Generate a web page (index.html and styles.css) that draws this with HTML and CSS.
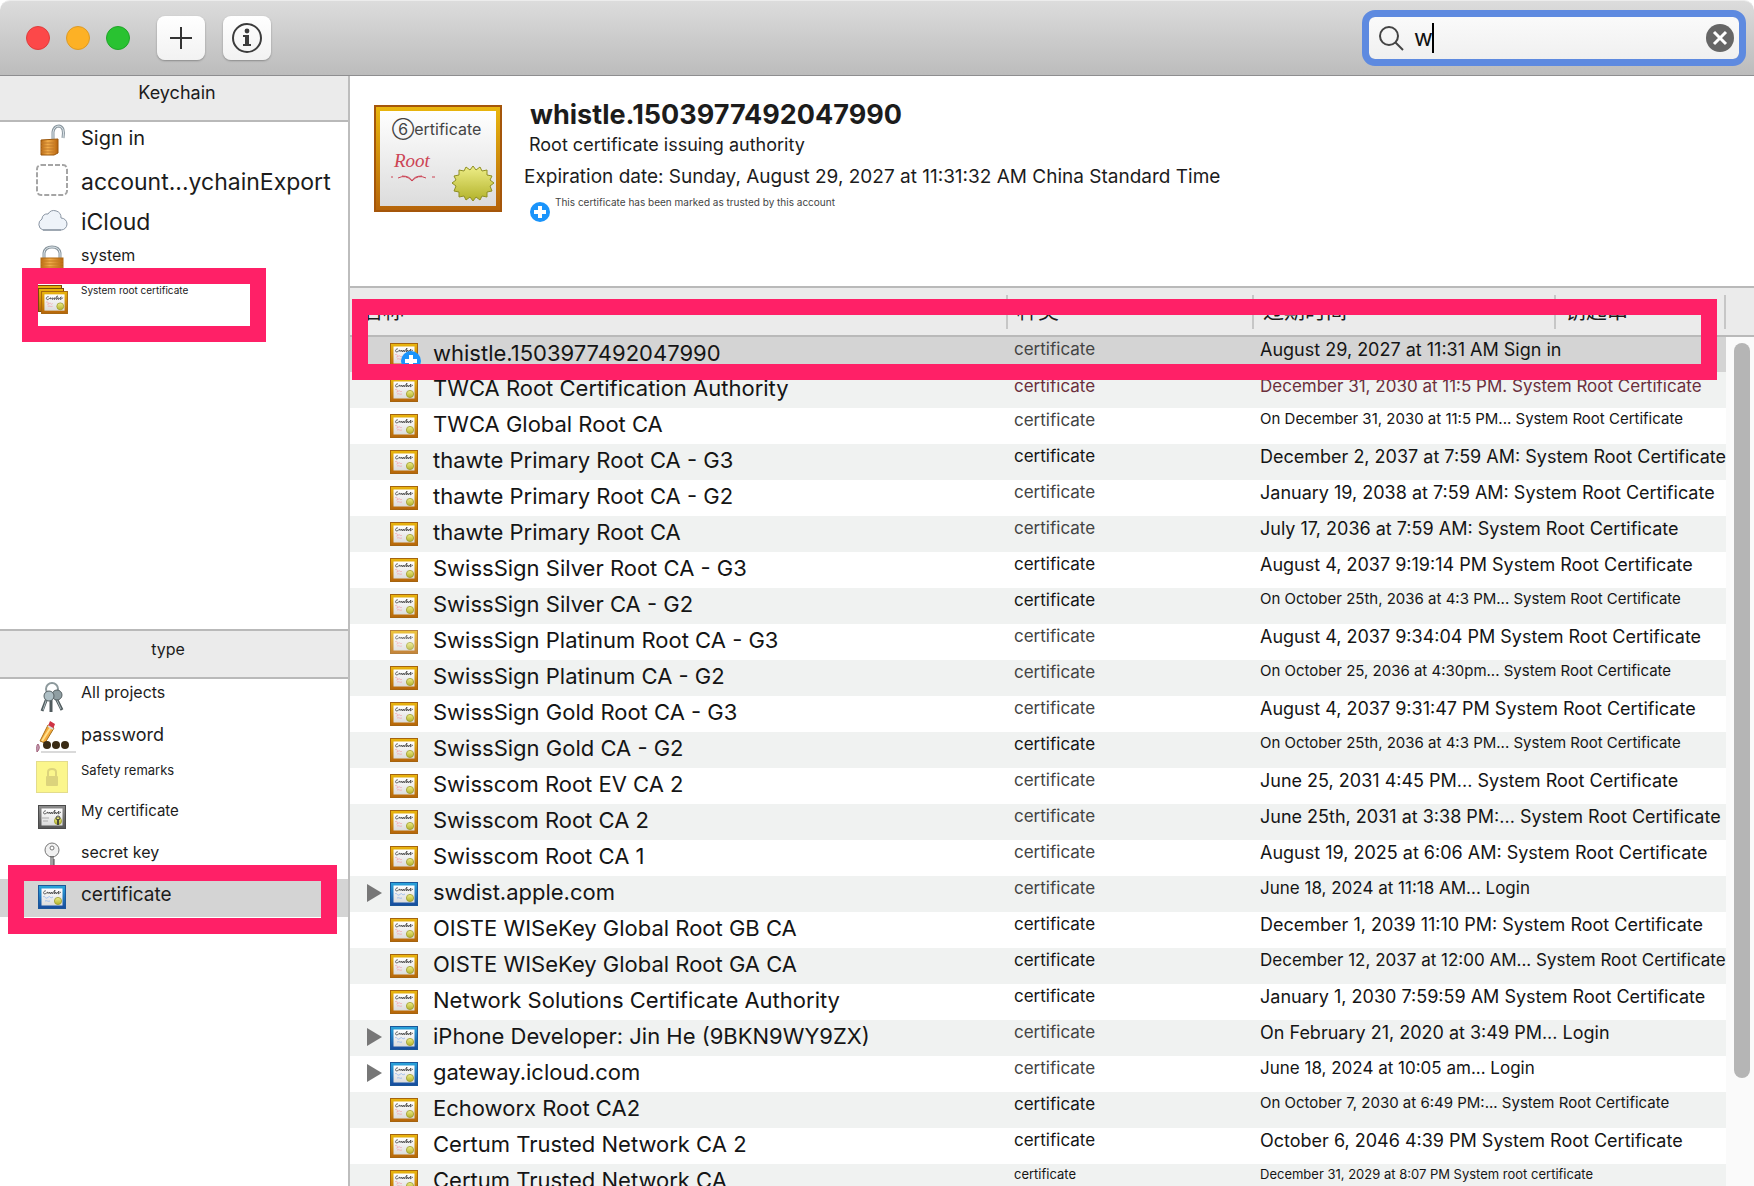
FILE: index.html
```html
<!DOCTYPE html>
<html lang="en">
<head>
    <meta charset="UTF-8">
    <meta name="viewport" content="width=device-width, initial-scale=1.0">
    <title>Keychain Access</title>
    <link rel="stylesheet" href="styles.css">
</head>
<body>
    <svg class="defs" width="0" height="0" aria-hidden="true">
        <defs>
            <linearGradient id="gold" x1="0" y1="0" x2="0" y2="1">
                <stop offset="0" stop-color="#eab70e"/><stop offset="1" stop-color="#b5640a"/>
            </linearGradient>
            <linearGradient id="blue" x1="0" y1="0" x2="0" y2="1">
                <stop offset="0" stop-color="#2aa5dc"/><stop offset="1" stop-color="#174a9c"/>
            </linearGradient>
            <linearGradient id="gray" x1="0" y1="0" x2="0" y2="1">
                <stop offset="0" stop-color="#8d8d8d"/><stop offset="1" stop-color="#555"/>
            </linearGradient>
            <linearGradient id="paper" x1="0" y1="0" x2="0" y2="1">
                <stop offset="0" stop-color="#fff"/><stop offset="1" stop-color="#dcdcdc"/>
            </linearGradient>
            <linearGradient id="seal" x1="0" y1="0" x2="0" y2="1">
                <stop offset="0" stop-color="#eeee88"/><stop offset="1" stop-color="#b2b22a"/>
            </linearGradient>
            <linearGradient id="brass" x1="0" y1="0" x2="1" y2="0">
                <stop offset="0" stop-color="#b96a12"/><stop offset="0.4" stop-color="#f3ae4c"/><stop offset="1" stop-color="#b8640d"/>
            </linearGradient>
        </defs>
        <symbol id="sheet" viewBox="0 0 28 24">
            <rect x="3.500" y="3.500" width="21" height="17" fill="url(#paper)"/>
            <path d="M8 6c-2-1-4 3-1 3l3-2q-1 2 1 1l1-1v2l2-2v2l3-4-1 4 2-2v2l3-3-1 3 3-2" fill="none" stroke="#444" stroke-width="0.8"/>
            <circle cx="20" cy="16" r="3.600" fill="url(#seal)" stroke="#9c9c2e" stroke-width="0.8"/>
        </symbol>
        <symbol id="cert-gold" viewBox="0 0 28 24">
            <rect x="0.5" y="0.5" width="27" height="23" fill="url(#gold)" stroke="#a5640f"/>
            <use href="#sheet" width="28" height="24"/>
            <path d="M5 12c2-2 3 1 2 2s2-2 3-1 1 1 2 0M7 16c2-1 3 1 5 0" fill="none" stroke="#f0a5af" stroke-width="0.8"/>
        </symbol>
        <symbol id="cert-blue" viewBox="0 0 28 24">
            <rect x="0.5" y="0.5" width="27" height="23" fill="url(#blue)" stroke="#1a5799"/>
            <use href="#sheet" width="28" height="24"/>
            <path d="M5 12c2-2 2 2 4 1s2-2 3-1 1 1 3 0M7 16c2-1 3 1 5 0" fill="none" stroke="#8fb4ea" stroke-width="0.8"/>
        </symbol>
        <symbol id="plus-badge" viewBox="0 0 20 20">
            <circle cx="10" cy="10" r="10" fill="#1a94fb"/>
            <path d="M10 4v12M4 10h12" stroke="#fff" stroke-width="4"/>
        </symbol>
    </svg>

    <header class="toolbar">
        <div class="lights">
            <button class="light red" aria-label="Close"></button>
            <button class="light yellow" aria-label="Minimize"></button>
            <button class="light green" aria-label="Zoom"></button>
        </div>
        <button class="tool" aria-label="Add">
            <svg width="22" height="22" viewBox="0 0 22 22"><path d="M11 0v22M0 11h22" stroke="#333" stroke-width="2"/></svg>
        </button>
        <button class="tool" aria-label="Info">
            <svg width="30" height="30" viewBox="0 0 30 30">
                <circle cx="15" cy="15" r="14" fill="none" stroke="#3c3c3c" stroke-width="2"/>
                <circle cx="15" cy="8" r="2.4" fill="#3c3c3c"/>
                <path d="M11 12h6v9h2v2h-8v-2h2v-7h-2z" fill="#3c3c3c"/>
            </svg>
        </button>
        <div class="search">
            <svg width="25" height="25" viewBox="0 0 25 25"><circle cx="10" cy="10" r="9" fill="none" stroke="#444" stroke-width="2"/><path d="M16 16l8 8" stroke="#444" stroke-width="2"/></svg>
            <div class="field">
                <input type="text" value="w" aria-label="Search">
                <span class="caret"></span>
            </div>
            <button class="clear" aria-label="Clear search">
                <svg width="28" height="28" viewBox="0 0 28 28"><circle cx="14" cy="14" r="14" fill="#666"/><path d="M8 8l12 12M20 8L8 20" stroke="#fff" stroke-width="3"/></svg>
            </button>
        </div>
    </header>

    <div class="content">
        <aside class="sidebar">
            <section class="pane keychains">
                <h2>Keychain</h2>
                <nav>
                    <a href="#" class="f20">
                        <svg width="32" height="32" viewBox="0 0 32 32"><path d="M17 15V8q1-6 6-6 6 1 4 12" fill="none" stroke="#8a969e" stroke-width="3"/><path d="M17 15V8q1-6 6-6 6 1 4 12" fill="none" stroke="#dfe8ed" stroke-width="1"/><path d="M5 16l17-1v14l-4 2H5z" fill="url(#brass)" stroke="#9a560c"/><path d="M5 19h13M5 22h13M5 25h13M5 28h13" stroke="#c0792a"/></svg>
                        Sign in
                    </a>
                    <a href="#" class="f23">
                        <svg width="32" height="32" viewBox="0 0 32 32"><rect x="1" y="1" width="30" height="30" rx="4" fill="none" stroke="#a5a5a5" stroke-width="2" stroke-dasharray="5 2"/></svg>
                        account...ychainExport
                    </a>
                    <a href="#" class="f23">
                        <svg width="32" height="32" viewBox="0 0 32 32"><path d="M7 26a6 6 0 0 1-1-11 5 5 0 0 1 6-5 7 7 0 0 1 13 4 6 6 0 0 1 0 12z" fill="#eef3f9" stroke="#8a95a3" stroke-width="1"/><path d="M7 26h18" stroke="#7b8694" stroke-width="1"/></svg>
                        iCloud
                    </a>
                    <a href="#" class="f16">
                        <svg width="32" height="32" viewBox="0 0 32 32"><path d="M8 15V9q1-6 8-6t8 6v6" fill="none" stroke="#8a969e" stroke-width="3"/><path d="M8 15V9q1-6 8-6t8 6v6" fill="none" stroke="#dfe8ed" stroke-width="1"/><rect x="5" y="14" width="22" height="16" fill="url(#brass)" stroke="#b06a14"/><path d="M5 17h22M5 20h22M5 23h22" stroke="#c47a1e"/></svg>
                        system
                    </a>
                    <a href="#" class="f10">
                        <svg width="32" height="32" viewBox="0 0 32 32"><rect x="0.5" y="1.500" width="25" height="23" fill="url(#gold)" stroke="#7a4a08"/><rect x="2.500" y="4.500" width="25" height="23" fill="url(#gold)" stroke="#7a4a08"/><use href="#cert-gold" x="5" y="7" width="27" height="23"/></svg>
                        System root certificate
                    </a>
                </nav>
                <div class="mark mark-root"></div>
            </section>
            <section class="pane types">
                <h2 class="small">type</h2>
                <nav>
                    <a href="#" class="f16">
                        <svg width="32" height="32" viewBox="0 0 32 32"><circle cx="16" cy="8" r="6" fill="none" stroke="#8d999c" stroke-width="2"/><path d="M11 17L6 30M15 18v13M20 17l6 12" stroke="#505b5e" stroke-width="3"/><path d="M11 17L7 29M20 17l5 11" stroke="#a9b6b9" stroke-width="1"/><circle cx="21" cy="14" r="5" fill="#8f9ea2" stroke="#566164"/><circle cx="13" cy="15" r="5" fill="#aebfc5" stroke="#566164"/></svg>
                        All projects
                    </a>
                    <a href="#" class="f18">
                        <svg class="wide" width="40" height="32" viewBox="0 0 40 32"><path d="M12 4l6 3-9 15-5-2z" fill="#f4a93c" stroke="#a8721c"/><path d="M15 6L6 20" stroke="#ffe08a" stroke-width="2"/><path d="M14 0l5 3-2 5-5-3z" fill="#cf3344"/><path d="M12 5l5 3" stroke="#ddd" stroke-width="2"/><path d="M1 31q-1-7 1-8 3 4-1 8z" fill="#c6a2b8" stroke="#a05f78"/><path d="M5 31h35" stroke="#b5b5b5"/><circle cx="11" cy="24" r="4" fill="#3a2b14"/><circle cx="20" cy="24" r="4" fill="#3a2b14"/><circle cx="29" cy="24" r="4" fill="#3a2b14"/></svg>
                        password
                    </a>
                    <a href="#" class="f13">
                        <svg width="32" height="32" viewBox="0 0 32 32"><rect x="0.5" y="0.5" width="31" height="31" fill="#fbf68c" stroke="#e3dc8c"/><path d="M12 15v-4q0-3 4-3t4 3v4" fill="none" stroke="#dcd37c" stroke-width="2"/><rect x="10" y="15" width="12" height="10" rx="1" fill="#dcd37c"/></svg>
                        Safety remarks
                    </a>
                    <a href="#" class="f15">
                        <svg width="32" height="32" viewBox="0 0 32 32"><rect x="2.500" y="4.500" width="27" height="23" fill="url(#gray)" stroke="#4a4a4a"/><use href="#sheet" x="2" y="4" width="28" height="24"/><path d="M6 17h7M7 20h5" stroke="#aaa"/><circle cx="22" cy="17" r="2" fill="none" stroke="#4a4a3a"/><path d="M22 18v6" stroke="#4a4a3a" stroke-width="2"/></svg>
                        My certificate
                    </a>
                    <a href="#" class="f16">
                        <svg width="32" height="32" viewBox="0 0 32 32"><circle cx="16" cy="9" r="7" fill="#f1f1f1" stroke="#777"/><circle cx="16" cy="7" r="2" fill="#fff" stroke="#777"/><path d="M15 15v16h2V15M18 18v10" fill="none" stroke="#444"/></svg>
                        secret key
                    </a>
                    <a href="#" class="f19 selected">
                        <svg width="32" height="32" viewBox="0 0 32 32"><use href="#cert-blue" x="2" y="4" width="28" height="24"/></svg>
                        certificate
                    </a>
                </nav>
                <div class="mark mark-type"></div>
            </section>
        </aside>

        <main class="main">
            <section class="detail">
                <svg class="certificate" width="128" height="107" viewBox="0 0 128 107">
                    <rect x="1" y="1" width="126" height="105" fill="url(#gold)" stroke="#a5560a" stroke-width="2"/>
                    <rect x="6" y="6" width="116" height="95" fill="url(#paper)"/>
                    <text class="cert-title" x="18" y="30">⑥ertificate</text>
                    <text class="cert-root" x="20" y="62">Root</text>
                    <path d="M17 72h2M24 73q8-4 14 3 6-7 14-3M28 71q8 0 10 5 2-5 10-5M58 72h3" fill="none" stroke="#cc4455"/>
                    <path d="M99 61l3 4 4-3 2 4 5-1 0 5 5 1-2 4 4 3-4 3 2 5-5 1 0 5-5-1-2 4-4-3-3 4-3-4-4 3-2-4-5 1 0-5-5-1 2-5-4-3 4-3-2-4 5-1 0-5 5 1 2-4 4 3z" fill="url(#seal)" stroke="#8f8f22"/>
                </svg>
                <div class="info">
                    <h1>whistle.1503977492047990</h1>
                    <p class="issuer">Root certificate issuing authority</p>
                    <p class="expires">Expiration date: Sunday, August 29, 2027 at 11:31:32 AM China Standard Time</p>
                    <p class="trust"><svg width="20" height="20"><use href="#plus-badge" width="20" height="20"/></svg>This certificate has been marked as trusted by this account</p>
                </div>
            </section>

            <section class="list">
                <table>
                    <colgroup><col><col class="col-kind"><col class="col-date"><col class="col-chain"><col class="col-scroll"></colgroup>
                    <thead>
                        <tr><th><span>名称</span></th><th><span>种类</span></th><th><span>过期时间</span></th><th><span>钥匙串</span></th><th></th></tr>
                    </thead>
                    <tbody id="rows"></tbody>
                </table>
                <div class="thumb"></div>
                <div class="mark mark-row"></div>
            </section>
        </main>
    </div>
    <script>
        // name, kind class, date class, date and keychain, icon, row class
        const certs = [
            ["whistle.1503977492047990", "dim", "large", "August 29, 2027 at 11:31 AM Sign in", "trusted", "selected"],
            ["TWCA Root Certification Authority", "", "medium", "December 31, 2030 at 11:5 PM. System Root Certificate", "gold", "tinted"],
            ["TWCA Global Root CA", "dim", "little", "On December 31, 2030 at 11:5 PM... System Root Certificate", "gold"],
            ["thawte Primary Root CA - G3", "", "large", "December 2, 2037 at 7:59 AM: System Root Certificate", "gold"],
            ["thawte Primary Root CA - G2", "dim", "large", "January 19, 2038 at 7:59 AM: System Root Certificate", "gold"],
            ["thawte Primary Root CA", "dim", "large", "July 17, 2036 at 7:59 AM: System Root Certificate", "gold"],
            ["SwissSign Silver Root CA - G3", "", "large", "August 4, 2037 9:19:14 PM System Root Certificate", "gold"],
            ["SwissSign Silver CA - G2", "", "little", "On October 25th, 2036 at 4:3 PM... System Root Certificate", "gold"],
            ["SwissSign Platinum Root CA - G3", "dim", "large", "August 4, 2037 9:34:04 PM System Root Certificate", "gold", "faded"],
            ["SwissSign Platinum CA - G2", "dim", "little", "On October 25, 2036 at 4:30pm... System Root Certificate", "gold"],
            ["SwissSign Gold Root CA - G3", "dim", "large", "August 4, 2037 9:31:47 PM System Root Certificate", "gold"],
            ["SwissSign Gold CA - G2", "", "little", "On October 25th, 2036 at 4:3 PM... System Root Certificate", "gold"],
            ["Swisscom Root EV CA 2", "dim", "large", "June 25, 2031 4:45 PM... System Root Certificate", "gold"],
            ["Swisscom Root CA 2", "dim", "large", "June 25th, 2031 at 3:38 PM:... System Root Certificate", "gold"],
            ["Swisscom Root CA 1", "dim", "large", "August 19, 2025 at 6:06 AM: System Root Certificate", "gold"],
            ["swdist.apple.com", "dim", "", "June 18, 2024 at 11:18 AM... Login", "blue"],
            ["OISTE WISeKey Global Root GB CA", "", "large", "December 1, 2039 11:10 PM: System Root Certificate", "gold"],
            ["OISTE WISeKey Global Root GA CA", "", "", "December 12, 2037 at 12:00 AM... System Root Certificate", "gold"],
            ["Network Solutions Certificate Authority", "", "large", "January 1, 2030 7:59:59 AM System Root Certificate", "gold"],
            ["iPhone Developer: Jin He (9BKN9WY9ZX)", "dim", "large", "On February 21, 2020 at 3:49 PM... Login", "blue"],
            ["gateway.icloud.com", "dim", "", "June 18, 2024 at 10:05 am... Login", "blue"],
            ["Echoworx Root CA2", "", "little", "On October 7, 2030 at 6:49 PM:... System Root Certificate", "gold"],
            ["Certum Trusted Network CA 2", "", "large", "October 6, 2046 4:39 PM System Root Certificate", "gold"],
            ["Certum Trusted Network CA", "tiny", "tiny", "December 31, 2029 at 8:07 PM System root certificate", "gold"]
        ];

        document.getElementById("rows").innerHTML = certs.map(([name, kind, size, date, icon, row = ""]) => {
            const arrow = icon === "blue" ? '<button class="expand" aria-label="Expand"></button>' : "";
            const badge = icon === "trusted" ? '<use href="#plus-badge" x="11" y="8" width="20" height="20"/>' : "";
            const frame = icon === "blue" ? "cert-blue" : "cert-gold";
            return `<tr class="${row}">
                <td><div class="name">${arrow}<svg><use href="#${frame}" width="28" height="24"/>${badge}</svg>${name}</div></td>
                <td class="${kind}">certificate</td>
                <td colspan="2" class="${size}"><span class="date">${date}</span></td>
                <td></td>
            </tr>`;
        }).join("");
    </script>
</body>
</html>
```
FILE: styles.css
```css
* {
    box-sizing: border-box;
}
body {
    margin: 0;
    height: 100vh;
    overflow: hidden;
    display: flex;
    flex-direction: column;
    background: #fff;
    color: #1c1c1c;
    font-family: Inter, "Noto Sans CJK SC", sans-serif;
}
button {
    border: none;
    padding: 0;
    background: none;
}
h1, h2, p {
    margin: 0;
}
.defs {
    position: absolute;
}

/* toolbar */
.toolbar {
    flex: none;
    height: 76px;
    display: flex;
    align-items: center;
    padding: 0 8px 0 26px;
    background: linear-gradient(#dcdcdc, #bcbcbc);
    border-top: 1px solid #ececec;
    border-bottom: 1px solid #8e8e90;
    border-radius: 10px 10px 0 0;
}
.lights {
    display: flex;
    gap: 16px;
    margin-right: 9px;
}
.light {
    width: 24px;
    height: 24px;
    border-radius: 50%;
}
.red {
    background: #fc4849;
    border: 1px solid #df3d3c;
}
.yellow {
    background: #fdb125;
    border: 1px solid #dd9a25;
}
.green {
    background: #29c231;
    border: 1px solid #1fa528;
}
.tool {
    width: 48px;
    height: 44px;
    margin-left: 18px;
    display: flex;
    align-items: center;
    justify-content: center;
    background: linear-gradient(#fff, #f2f2f2);
    border-radius: 8px;
    box-shadow: 0 1px 2px #8a8a8a;
}
.search {
    width: 384px;
    height: 56px;
    margin-left: auto;
    padding: 0 5px 0 10px;
    display: flex;
    align-items: center;
    gap: 10px;
    background: linear-gradient(#fafafa, #f0f0f0);
    background-clip: padding-box;
    border: 7px solid #5e8ae0;
    border-radius: 13px;
}
.field {
    position: relative;
    flex: 1;
}
.field input {
    width: 100%;
    height: 38px;
    padding: 0;
    border: none;
    outline: none;
    background: none;
    font-family: inherit;
    font-size: 23px;
    color: #111;
}
.caret {
    position: absolute;
    left: 18px;
    top: 4px;
    width: 2px;
    height: 30px;
    background: #000;
}
.clear {
    height: 28px;
}

/* sidebar */
.content {
    flex: 1;
    min-height: 0;
    display: flex;
}
.sidebar {
    flex: none;
    width: 350px;
    display: flex;
    flex-direction: column;
    border-right: 2px solid #bdbdbd;
}
.pane {
    position: relative;
}
.keychains {
    flex: 0 0 553px;
}
.types {
    flex: 1;
    border-top: 2px solid #b9b9b9;
}
.pane h2 {
    height: 46px;
    padding-left: 6px;
    background: #ebebeb;
    border-bottom: 2px solid #b9b9b9;
    text-align: center;
    font-size: 18px;
    font-weight: 400;
    line-height: 33px;
}
.pane h2.small {
    height: 48px;
    padding: 0 12px 0 0;
    font-size: 16px;
    line-height: 37px;
}
.pane a {
    display: flex;
    align-items: flex-start;
    gap: 13px;
    height: 38px;
    margin-bottom: 2px;
    padding-left: 36px;
    color: inherit;
    text-decoration: none;
    white-space: nowrap;
}
.pane a svg {
    flex: none;
    margin-top: 2px;
}
.pane a .wide {
    margin-right: -8px;
}
.pane a.selected {
    background: #d4d4d4;
}
.f10 { font-size: 10px; line-height: 16px; }
.f13 { font-size: 13px; line-height: 22px; }
.f15 { font-size: 15px; line-height: 24px; }
.f16 { font-size: 16px; line-height: 27px; }
.f18 { font-size: 18px; line-height: 32px; }
.f19 { font-size: 19px; line-height: 32px; }
.f20 { font-size: 20px; line-height: 32px; }
.f23 { font-size: 23px; line-height: 40px; }

/* highlight frames */
.mark {
    position: absolute;
    border: 16px solid #ff2067;
    z-index: 2;
}
.mark-root {
    left: 22px;
    top: 192px;
    width: 244px;
    height: 74px;
}
.mark-type {
    left: 8px;
    top: 234px;
    width: 329px;
    height: 69px;
}
.mark-row {
    left: 2px;
    top: 11px;
    right: 37px;
    height: 81px;
}

/* certificate details */
.main {
    flex: 1;
    min-width: 0;
    display: flex;
    flex-direction: column;
}
.detail {
    flex: none;
    height: 210px;
    display: flex;
    align-items: flex-start;
    padding: 29px 24px 0;
    gap: 22px;
}
.certificate {
    flex: none;
}
.cert-title {
    font-size: 16px;
    fill: #444;
}
.cert-root {
    font-family: "Liberation Serif", serif;
    font-style: italic;
    font-size: 19px;
    fill: #cc4455;
}
.info {
    margin-top: -6px;
}
.info h1 {
    padding-left: 6px;
    font-size: 27px;
    line-height: 32px;
}
.issuer {
    padding-left: 5px;
    font-size: 18px;
    line-height: 28px;
}
.expires {
    font-size: 19px;
    line-height: 36px;
}
.trust {
    display: flex;
    gap: 5px;
    padding-left: 6px;
    font-size: 10px;
    line-height: 14px;
    color: #444;
}
.trust svg {
    margin-top: 7px;
}

/* certificate list */
.list {
    position: relative;
    flex: 1;
    min-height: 0;
    overflow: hidden;
    border-top: 2px solid #b9b9b9;
}
table {
    width: 100%;
    table-layout: fixed;
    border-collapse: collapse;
}
.col-kind {
    width: 246px;
}
.col-date {
    width: 302px;
}
.col-chain {
    width: 170px;
}
.col-scroll {
    width: 28px;
}
th {
    height: 48px;
    padding: 0;
    background: #ebebeb;
    border-bottom: 2px solid #b9b9b9;
    text-align: left;
    font-size: 21px;
    font-weight: 400;
}
th span {
    display: block;
    height: 34px;
    padding-left: 12px;
    border-right: 2px solid #c6c6c6;
    line-height: 31px;
}
th + th span {
    padding-left: 9px;
}
td {
    height: 36px;
    padding: 0 0 0 6px;
    vertical-align: top;
    white-space: nowrap;
    font-size: 17px;
    line-height: 25px;
    color: #151515;
}
td:first-child {
    padding: 0;
}
.large {
    font-size: 18px;
    line-height: 26px;
}
.medium {
    font-size: 17px;
}
.little {
    font-size: 15px;
    line-height: 21px;
}
.tiny {
    font-size: 13px;
    line-height: 20px;
}
tbody tr:nth-child(even) {
    background: #f0f2f1;
}
tbody tr.selected {
    background: #d4d4d4;
}
.tinted td + td {
    line-height: 28px;
    color: #6b2f3c;
}
.dim {
    color: #444;
}
tbody td:last-child {
    background: #fafafa;
}
.date {
    position: relative;
    z-index: 1;
}
.name {
    display: flex;
    align-items: center;
    height: 32px;
    padding-left: 40px;
    font-size: 22px;
}
.name svg {
    flex: none;
    width: 32px;
    height: 24px;
    margin: 4px 11px 0 0;
    overflow: visible;
}
.faded svg {
    opacity: 0.8;
}
.expand {
    width: 15px;
    height: 18px;
    margin: 2px 8px 0 -23px;
    background: #777;
    clip-path: polygon(0 0, 100% 50%, 0 100%);
}
.thumb {
    position: absolute;
    top: 55px;
    right: 4px;
    width: 16px;
    height: 735px;
    border-radius: 8px;
    background: #b5b5b5;
}
```
